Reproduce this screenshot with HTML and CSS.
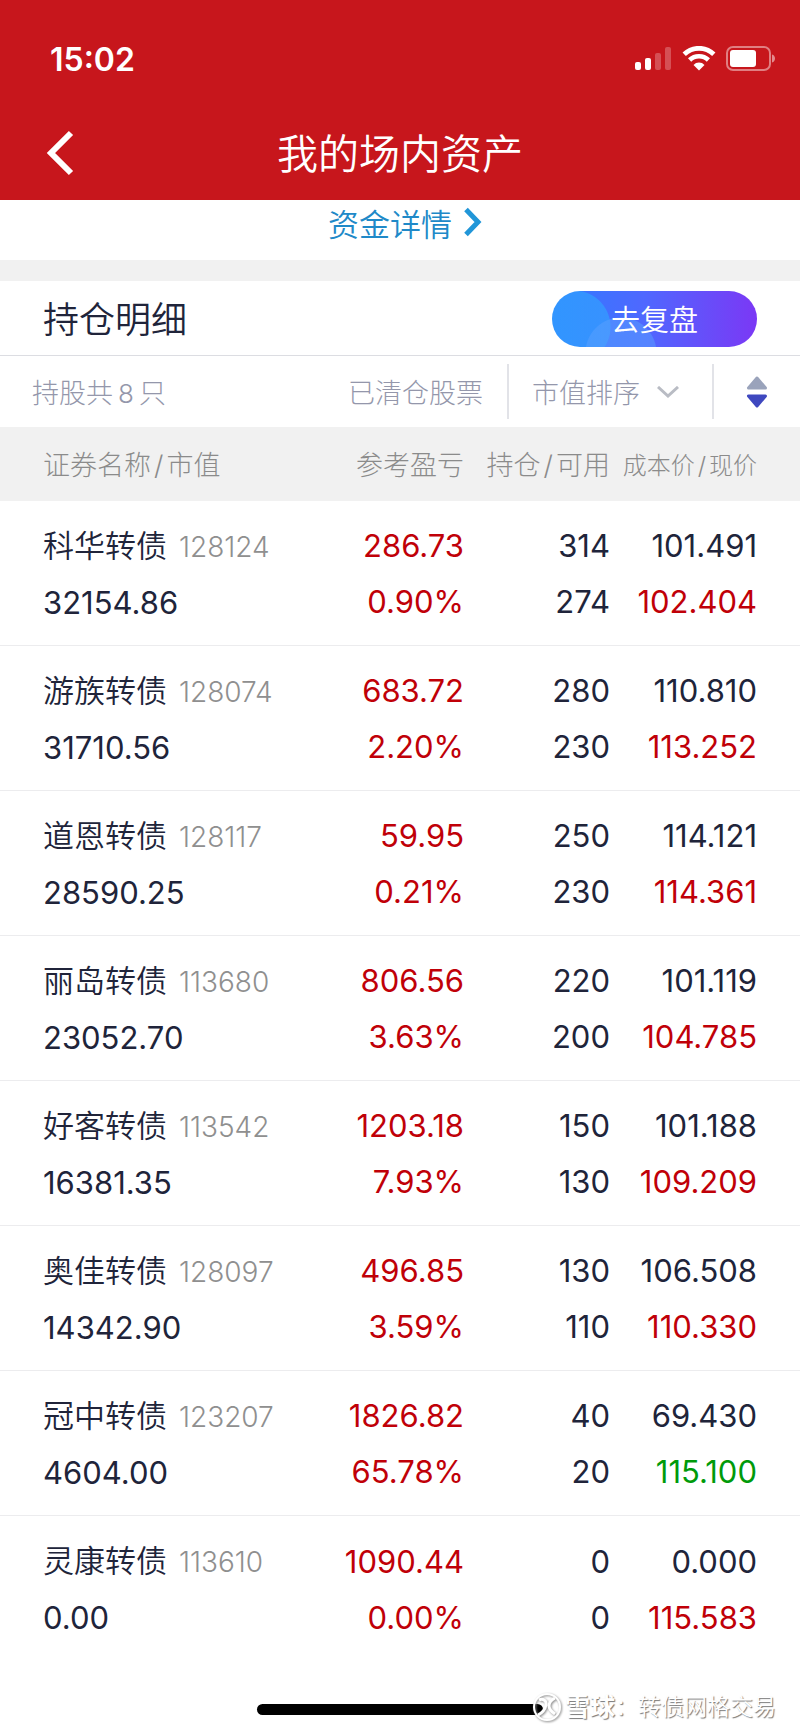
FILE: index.html
```html
<!DOCTYPE html>
<html lang="zh-CN">
<head>
    <meta charset="UTF-8">
    <meta name="viewport" content="width=device-width, initial-scale=1.0">
    <title>我的场内资产</title>
    <link rel="stylesheet" href="styles.css">
</head>
<body>
    <header class="app-header">
        <div class="status-bar">
            <span class="status-time">15:02</span>
            <div class="status-icons">
                <svg width="38" height="26" viewBox="0 0 38 26" fill="#fff">
                    <rect x="1" y="16" width="6" height="8" rx="2"/>
                    <rect x="11" y="12" width="6" height="12" rx="2"/>
                    <rect x="21" y="7" width="6" height="17" rx="2" opacity="0.25"/>
                    <rect x="31" y="1" width="6" height="23" rx="2" opacity="0.25"/>
                </svg>
                <svg width="34" height="26" viewBox="0 0 34 26" fill="none" stroke="#fff">
                    <path d="M2.200 8.200A21.500 21.500 0 0 1 31.800 8.200" stroke-width="4.800"/>
                    <path d="M7.600 14A13.500 13.500 0 0 1 26.400 14" stroke-width="4.600"/>
                    <path d="M17 24.600l-5.500-5.600a7.500 7.500 0 0 1 11 0z" fill="#fff" stroke="none"/>
                </svg>
                <svg width="50" height="26" viewBox="0 0 50 26">
                    <rect x="1" y="1" width="43" height="23" rx="6" fill="none" stroke="#fff" stroke-opacity="0.45" stroke-width="2"/>
                    <rect x="4" y="4" width="26" height="17" rx="3" fill="#fff"/>
                    <path d="M46 8.500v8c4-1 4-7 0-8z" fill="#fff" fill-opacity="0.5"/>
                </svg>
            </div>
        </div>
        <div class="nav-bar">
            <button class="back-btn" aria-label="返回">
                <svg width="30" height="46" viewBox="0 0 30 46" fill="none" stroke="#fff" stroke-width="6">
                    <path d="M25 3L5 23l20 20"/>
                </svg>
            </button>
            <h1>我的场内资产</h1>
        </div>
    </header>

    <main>
        <div class="fund-row">
            <a class="fund-link" href="#">资金详情
                <svg width="18" height="30" viewBox="0 0 18 30" fill="none" stroke="#2196d8" stroke-width="5">
                    <path d="M2 2.500L14 15 2 27.500"/>
                </svg>
            </a>
        </div>

        <div class="section-title">
            <h2>持仓明细</h2>
            <button class="review-btn">去复盘</button>
        </div>

        <div class="filter-bar">
            <span>持股共<span class="count">8</span>只</span>
            <a class="cleared" href="#">已清仓股票</a>
            <button class="sort-by">市值排序
                <svg width="22" height="12" viewBox="0 0 22 12" fill="none" stroke="#b9bcc4" stroke-width="3">
                    <path d="M1 1l10 9L21 1"/>
                </svg>
            </button>
            <button class="sort-dir" aria-label="排序方向">
                <svg width="22" height="34" viewBox="0 0 22 34" stroke-width="3" stroke-linejoin="round">
                    <path d="M11 3L2.500 13h17z" fill="#9aa3bb" stroke="#9aa3bb"/>
                    <path d="M11 31L2.500 21h17z" fill="#3f48bf" stroke="#3f48bf"/>
                </svg>
            </button>
        </div>

        <table class="holdings">
            <thead>
                <tr>
                    <th class="col-name">证券名称<span class="slash">/</span>市值</th>
                    <th class="col-profit">参考盈亏</th>
                    <th class="col-amount">持仓<span class="slash">/</span>可用</th>
                    <th class="col-price">成本价<span class="slash">/</span>现价</th>
                </tr>
            </thead>
            <tbody>
                <tr>
                    <td><span class="name">科华转债</span><span class="code">128124</span><br>32154.86</td>
                    <td class="up">286.73<br>0.90%</td>
                    <td>314<br>274</td>
                    <td>101.491<br><span class="up">102.404</span></td>
                </tr>
                <tr>
                    <td><span class="name">游族转债</span><span class="code">128074</span><br>31710.56</td>
                    <td class="up">683.72<br>2.20%</td>
                    <td>280<br>230</td>
                    <td>110.810<br><span class="up">113.252</span></td>
                </tr>
                <tr>
                    <td><span class="name">道恩转债</span><span class="code">128117</span><br>28590.25</td>
                    <td class="up">59.95<br>0.21%</td>
                    <td>250<br>230</td>
                    <td>114.121<br><span class="up">114.361</span></td>
                </tr>
                <tr>
                    <td><span class="name">丽岛转债</span><span class="code">113680</span><br>23052.70</td>
                    <td class="up">806.56<br>3.63%</td>
                    <td>220<br>200</td>
                    <td>101.119<br><span class="up">104.785</span></td>
                </tr>
                <tr>
                    <td><span class="name">好客转债</span><span class="code">113542</span><br>16381.35</td>
                    <td class="up">1203.18<br>7.93%</td>
                    <td>150<br>130</td>
                    <td>101.188<br><span class="up">109.209</span></td>
                </tr>
                <tr>
                    <td><span class="name">奥佳转债</span><span class="code">128097</span><br>14342.90</td>
                    <td class="up">496.85<br>3.59%</td>
                    <td>130<br>110</td>
                    <td>106.508<br><span class="up">110.330</span></td>
                </tr>
                <tr>
                    <td><span class="name">冠中转债</span><span class="code">123207</span><br>4604.00</td>
                    <td class="up">1826.82<br>65.78%</td>
                    <td>40<br>20</td>
                    <td>69.430<br><span class="down">115.100</span></td>
                </tr>
                <tr>
                    <td><span class="name">灵康转债</span><span class="code">113610</span><br>0.00</td>
                    <td class="up">1090.44<br>0.00%</td>
                    <td>0<br>0</td>
                    <td>0.000<br><span class="up">115.583</span></td>
                </tr>
            </tbody>
        </table>
    </main>

    <footer class="home-area">
        <div class="home-bar"></div>
        <div class="watermark">
            <svg width="30" height="30" viewBox="0 0 30 30" fill="none" stroke="#fff" stroke-width="2">
                <circle cx="15" cy="15" r="13"/>
                <path d="M7 8c4-2 8 1 7 5-1 5-4 8-8 10M23 6c-4 2-6 5-6 8s3 6 6 8" stroke-width="3"/>
            </svg>
            <strong>雪球</strong><span>：转债网格交易</span>
        </div>
    </footer>
</body>
</html>
```

FILE: styles.css
```css
* {
    box-sizing: border-box;
}

body {
    font-family: Inter, "Noto Sans CJK SC", sans-serif;
    font-weight: 350;
    margin: 0;
    background: #fff;
    color: #20243a;
}

h1, h2 {
    margin: 0;
    font-weight: 350;
}

button {
    padding: 0;
    border: none;
    background: none;
    font: inherit;
    color: inherit;
    cursor: pointer;
}

a {
    color: inherit;
    text-decoration: none;
}

svg {
    display: block;
}

.app-header {
    background: #c7161c;
    color: #fff;
}

.status-bar {
    display: flex;
    justify-content: space-between;
    align-items: center;
    height: 106px;
    padding: 12px 24px 0 50px;
}

.status-time {
    font-size: 32px;
    font-weight: 600;
}

.status-icons {
    display: flex;
    gap: 10px;
}

.nav-bar {
    display: grid;
    grid-template-columns: 46px 1fr 46px;
    align-items: center;
    height: 94px;
    padding: 0 32px;
}

.back-btn {
    padding-left: 14px;
}

.nav-bar h1 {
    padding-bottom: 4px;
    font-size: 41px;
    text-align: center;
}

.fund-row {
    display: flex;
    justify-content: center;
    height: 60px;
    padding-left: 10px;
}

.fund-link {
    display: flex;
    align-items: center;
    gap: 12px;
    height: 44px;
    font-size: 31px;
    color: #2089c8;
}

.section-title {
    display: flex;
    justify-content: space-between;
    align-items: center;
    padding: 10px 43px 8px;
    border-top: 21px solid #f1f1f1;
    border-bottom: 1px solid #dcdde2;
}

.section-title h2 {
    padding-top: 2px;
    font-size: 36px;
    line-height: 54px;
}

.review-btn {
    width: 205px;
    height: 56px;
    padding-bottom: 3px;
    border-radius: 28px;
    background:
        radial-gradient(circle at 69px 62px, rgba(90, 160, 255, 0.5) 35px, transparent 36px),
        radial-gradient(circle at 22px 36px, rgba(50, 160, 255, 0.7) 36px, transparent 37px),
        linear-gradient(90deg, #2f7cff, #4f68ff 45%, #7b38f5);
    color: #fff;
    font-size: 29px;
}

.filter-bar {
    display: flex;
    align-items: center;
    height: 71px;
    padding-left: 32px;
    font-size: 27px;
    font-weight: 300;
    color: #9497ab;
}

.count {
    margin: 0 5px;
    font-size: 26px;
}

.cleared {
    margin-left: auto;
    padding-right: 24px;
}

.sort-by,
.sort-dir {
    display: flex;
    align-items: center;
    height: 55px;
    border-left: 2px solid #e2e3e8;
}

.sort-by {
    gap: 17px;
    padding: 0 33px 0 23px;
}

.sort-dir {
    padding: 0 32px;
}

.holdings {
    width: 100%;
    border-collapse: separate;
    border-spacing: 0;
    table-layout: fixed;
}

.holdings th,
.holdings td {
    padding: 0;
    text-align: right;
    white-space: nowrap;
}

.holdings th:first-child,
.holdings td:first-child {
    padding-left: 43px;
    text-align: left;
}

.holdings th:last-child,
.holdings td:last-child {
    padding-right: 43px;
}

.holdings th {
    height: 74px;
    padding-bottom: 2px;
    background: #f1f1f1;
    color: #8b8b8b;
    font-size: 27px;
    font-weight: 300;
}

.slash {
    margin: 0 3px;
}

.holdings .col-name {
    width: 38%;
}

.holdings .col-profit {
    width: 20%;
}

.holdings .col-price {
    width: 190px;
    font-size: 24px;
}

.holdings td {
    height: 145px;
    padding-top: 2px;
    border-bottom: 1px solid #ececee;
    font-size: 31px;
    font-weight: 400;
    line-height: 56px;
}

.holdings tr:last-child td {
    border-bottom: none;
}

.holdings .name {
    font-weight: 350;
}

.holdings .code {
    margin-left: 12px;
    font-size: 28px;
    font-weight: 300;
    color: #8f8f8f;
}

.up {
    color: #c00008;
}

.down {
    color: #009a0a;
}

.home-area {
    position: relative;
    height: 71px;
    padding-top: 43px;
}

.home-bar {
    width: 286px;
    height: 11px;
    margin: 0 auto;
    border-radius: 6px;
    background: #000;
}

.watermark {
    position: absolute;
    right: 24px;
    bottom: 9px;
    display: flex;
    align-items: center;
    font-size: 23px;
    line-height: 32px;
    color: #fff;
    text-shadow: 1px 1px 1px #777;
}

.watermark svg {
    margin-right: 3px;
    filter: drop-shadow(1px 1px 1px #888);
}

.watermark strong {
    font-size: 25px;
}
```
